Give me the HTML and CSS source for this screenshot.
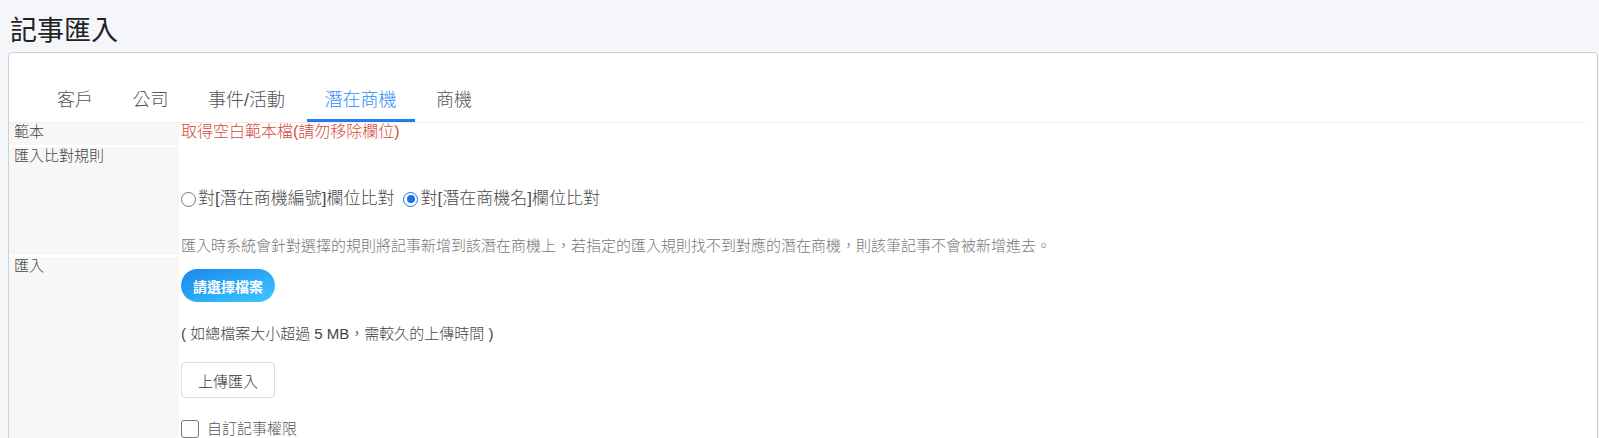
FILE: index.html
```html
<!DOCTYPE html>
<html lang="zh-Hant">
<head>
<meta charset="utf-8">
<title>記事匯入</title>
<link rel="stylesheet" href="styles.css">
</head>
<body>
<div class="page-title">記事匯入</div>
<div class="card">
  <div class="tabs">
    <a class="tab">客戶</a>
    <a class="tab">公司</a>
    <a class="tab">事件/活動</a>
    <a class="tab active">潛在商機</a>
    <a class="tab">商機</a>
  </div>
  <div class="form">
    <div class="label">範本</div>
    <div class="value value-template"><a class="link-red">取得空白範本檔(請勿移除欄位)</a></div>

    <div class="label">匯入比對規則</div>
    <div class="value value-rule">
      <div class="radios">
        <label class="radio"><span class="radio-dot"></span>對[潛在商機編號]欄位比對</label>
        <label class="radio"><span class="radio-dot checked"></span>對[潛在商機名]欄位比對</label>
      </div>
      <div class="desc">匯入時系統會針對選擇的規則將記事新增到該潛在商機上，若指定的匯入規則找不到對應的潛在商機，則該筆記事不會被新增進去。</div>
    </div>

    <div class="label">匯入</div>
    <div class="value value-import">
      <button class="btn-file">請選擇檔案</button>
      <div class="note">( 如總檔案大小超過 5 MB，需較久的上傳時間 )</div>
      <button class="btn-upload">上傳匯入</button>
      <label class="check"><span class="check-box"></span>自訂記事權限</label>
    </div>
  </div>
</div>
</body>
</html>
```

FILE: styles.css
```css
html, body {
  margin: 0;
  padding: 0;
  overflow: hidden;
}
body {
  background: #f5f6fa;
  font-family: "Liberation Sans", "Noto Sans CJK TC", sans-serif;
  font-weight: 300;
  color: #333;
}
.page-title {
  padding: 13px 0 3px 10px;
  font-size: 27px;
  font-weight: 400;
  line-height: 36px;
  color: #222;
}
.card {
  margin-left: 8px;
  width: 1590px;
  height: 600px;
  box-sizing: border-box;
  background: #fff;
  border: 1px solid #cfcfcf;
  border-radius: 4px;
}
.tabs {
  display: flex;
  gap: 3.5px;
  padding: 30px 0 0 30px;
  margin-right: 12px;
  border-bottom: 1px solid #eeeeee;
}
.tab {
  display: block;
  padding: 0 18px 2px;
  font-size: 18px;
  line-height: 34px;
  color: #555;
  border-bottom: 3px solid transparent;
  cursor: pointer;
}
.tab.active {
  color: #2f8cf5;
  border-bottom-color: #1f7cf2;
}
.form {
  display: grid;
  grid-template-columns: 170px 1fr;
  row-gap: 2px;
}
.label {
  background: #f7f7f7;
  padding: 1px 0 0 5px;
  font-size: 15px;
  line-height: 16px;
  color: #444;
}
.value {
  padding-left: 2px;
}
.value-template {
  padding-bottom: 4px;
  font-size: 16px;
  line-height: 18px;
}
.link-red {
  color: #d4493b;
  cursor: pointer;
}
.value-rule {
  padding-top: 40px;
}
.radios {
  display: flex;
  gap: 9px;
  font-size: 17px;
  line-height: 24px;
  color: #4a4a4a;
}
.radio {
  display: flex;
  align-items: center;
  gap: 2px;
}
.radio-dot {
  width: 13px;
  height: 13px;
  border: 1.5px solid #777;
  border-radius: 50%;
  display: inline-flex;
  align-items: center;
  justify-content: center;
  box-sizing: content-box;
}
.radio-dot.checked {
  border-color: #1a73e8;
}
.radio-dot.checked::after {
  content: "";
  width: 8px;
  height: 8px;
  border-radius: 50%;
  background: #1a73e8;
}
.desc {
  margin-top: 26px;
  font-size: 15px;
  line-height: 18px;
  color: #777;
}
.value-import {
  display: flex;
  flex-direction: column;
  align-items: flex-start;
  padding-top: 12px;
}
.btn-file {
  width: 94px;
  height: 33px;
  border: none;
  border-radius: 17px;
  background: linear-gradient(to bottom right, #1a86ee, #3cc8ff);
  color: #fff;
  font-family: inherit;
  font-size: 14px;
  font-weight: bold;
  padding: 0;
  cursor: pointer;
}
.note {
  margin-top: 23px;
  font-size: 15px;
  line-height: 18px;
  color: #444;
}
.btn-upload {
  margin-top: 19px;
  width: 94px;
  height: 36px;
  border: 1px solid #dddddd;
  border-radius: 4px;
  background: #fff;
  color: #333;
  font-family: inherit;
  font-weight: 300;
  font-size: 15px;
  padding: 0;
}
.check {
  margin-top: 21px;
  display: flex;
  align-items: center;
  gap: 8px;
  font-size: 15px;
  line-height: 20px;
  color: #555;
}
.check-box {
  width: 16px;
  height: 16px;
  border: 1.5px solid #777;
  border-radius: 3px;
  box-sizing: content-box;
}
```
